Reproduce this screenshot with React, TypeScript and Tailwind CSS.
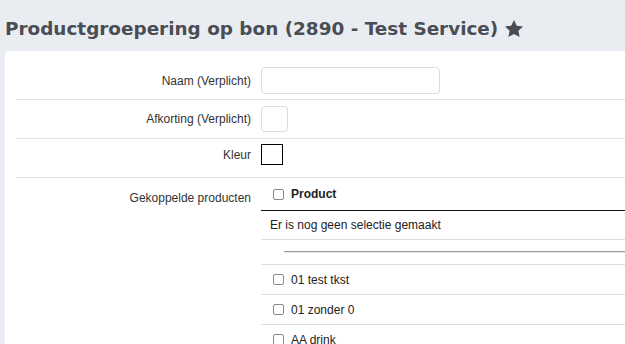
import React from "react";

const Box = () => (
  <span className="inline-block w-[11px] h-[11px] border border-[#8a8a8a] rounded-[2px] bg-white shrink-0" />
);

export default function App() {
  const label = "w-[235px] shrink-0 text-right text-[12px] text-[#333] leading-none";
  return (
    <div
      className="w-[625px] h-[344px] overflow-hidden bg-[#e9edf1]"
      style={{ fontFamily: '"Liberation Sans", Arial, sans-serif' }}
    >
      <div className="h-[51px] flex items-center pl-[5px] pt-[7px]">
        <h1
          className="text-[18.4px] font-bold text-[#4a4d55] whitespace-nowrap flex items-center gap-[6px]"
          style={{ fontFamily: '"DejaVu Sans", Verdana, sans-serif' }}
        >
          Productgroepering op bon (2890 - Test Service)
          <svg width="20" height="20" viewBox="0 0 24 24" fill="#4a4d55">
            <path d="M12 1.2l3.3 6.8 7.5 1-5.5 5.2 1.4 7.4L12 18l-6.7 3.6 1.4-7.4L1.2 9l7.5-1z" />
          </svg>
        </h1>
      </div>
      <div className="ml-[5px] w-[800px] bg-white rounded-tl-[3px] pl-[11px] pt-[16px] h-[400px]">
        <div className="flex items-center gap-[10px] pb-[5px] border-b border-[#e2e2e2]">
          <div className={label}>Naam (Verplicht)</div>
          <div className="w-[179px] h-[27px] border border-[#dcdcdc] rounded-[4px]" />
        </div>
        <div className="flex items-center gap-[10px] pt-[6px] pb-[6px] border-b border-[#e2e2e2]">
          <div className={label}>Afkorting (Verplicht)</div>
          <div className="w-[27px] h-[26px] border border-[#dcdcdc] rounded-[4px]" />
        </div>
        <div className="flex items-center gap-[10px] pt-[5px] pb-[12px] border-b border-[#e2e2e2]">
          <div className={label}>Kleur</div>
          <div className="w-[22px] h-[21px] border border-black" />
        </div>
        <div className="flex items-start gap-[10px]">
          <div className={label + " pt-[14px]"}>Gekoppelde producten</div>
          <div className="w-[520px] text-[12px] text-[#222]">
            <div className="h-[33px] flex items-center gap-[7px] pl-[12px] border-b border-[#111] font-bold">
              <Box />
              <span>Product</span>
            </div>
            <div className="h-[29px] flex items-center pl-[9px] border-b border-[#dedede]">
              Er is nog geen selectie gemaakt
            </div>
            <div className="h-[25px] flex items-center pl-[23px] border-b border-[#dedede]">
              <div className="w-full border-t border-[#9c9c9c] border-b border-b-[#e6e6e6]" />
            </div>
            {["01 test tkst", "01 zonder 0", "AA drink"].map((t) => (
              <div key={t} className="h-[30px] flex items-center gap-[7px] pl-[12px] border-b border-[#dedede]">
                <Box />
                <span>{t}</span>
              </div>
            ))}
          </div>
        </div>
      </div>
    </div>
  );
}
